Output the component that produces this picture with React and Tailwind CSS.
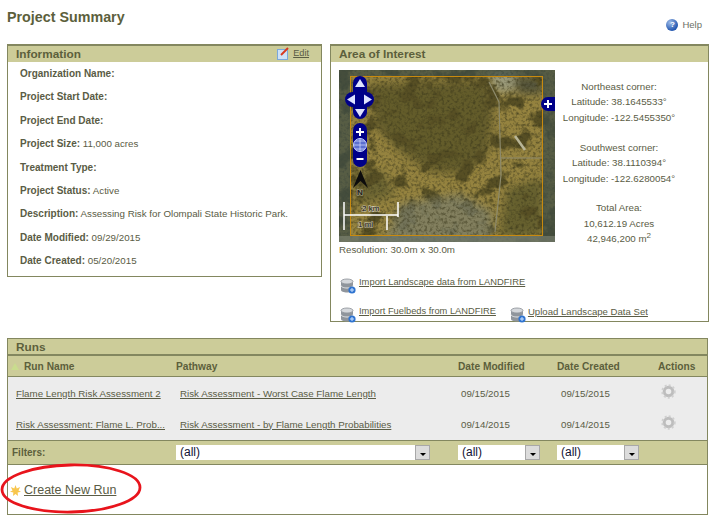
const infoRows = [
  ['Organization Name:', ''],
  ['Project Start Date:', ''],
  ['Project End Date:', ''],
  ['Project Size:', '11,000 acres'],
  ['Treatment Type:', ''],
  ['Project Status:', 'Active'],
  ['Description:', 'Assessing Risk for Olompali State Historic Park.'],
  ['Date Modified:', '09/29/2015'],
  ['Date Created:', '05/20/2015'],
];

const runs = [
  {
    name: 'Flame Length Risk Assessment 2',
    pathway: 'Risk Assessment - Worst Case Flame Length',
    modified: '09/15/2015',
    created: '09/15/2015',
  },
  {
    name: 'Risk Assessment: Flame L. Prob...',
    pathway: 'Risk Assessment - by Flame Length Probabilities',
    modified: '09/14/2015',
    created: '09/14/2015',
  },
];

const PanelTitle = ({ children, className = 'h-[16px]' }) => (
  <div className={`bg-[#cccc99] pl-[8px] text-[11.800px] leading-[16px] font-bold text-[#5c5f3c] ${className}`}>{children}</div>
);

const DbIcon = () => (
  <svg width="16" height="16" viewBox="0 0 16 16" className="relative shrink-0">
    <ellipse cx="7" cy="3.500" rx="6" ry="2.500" fill="#d5d8dc" stroke="#7d838a" strokeWidth="0.700" />
    <path d="M1 3.500v8.500c0 1.400 2.700 2.500 6 2.500s6-1.100 6-2.500V3.500c0 1.400-2.700 2.500-6 2.500S1 4.900 1 3.500z" fill="#8f959c" />
    <path d="M1 7.500c0 1.400 2.700 2.500 6 2.500s6-1.100 6-2.500" fill="none" stroke="#e4e6e8" strokeWidth="1" />
    <circle cx="12" cy="12" r="3.600" fill="#2f74d0" />
    <path d="M12 10v4M10 12h4" stroke="#cfe3ff" strokeWidth="1" />
  </svg>
);

const Gear = () => (
  <svg width="15" height="15" viewBox="0 0 15 15">
    <circle cx="7.500" cy="7.500" r="4.300" fill="none" stroke="#bdbdbd" strokeWidth="3" />
    <circle cx="7.500" cy="7.500" r="6.200" fill="none" stroke="#cfcfcf" strokeWidth="2" strokeDasharray="2 2.100" />
  </svg>
);

const SelectBox = ({ className }) => (
  <div className={`flex h-[15px] items-center justify-between bg-white pl-[4px] text-[12px] leading-[15px] text-[#111133] ${className}`}>
    <span>(all)</span>
    <span className="flex h-[15px] w-[15px] items-center justify-center border border-[#a8a8a8] bg-[#dcdcdc]">
      <span className="mt-[3px] h-0 w-0 border-x-[3px] border-t-[3px] border-x-transparent border-t-black" />
    </span>
  </div>
);

const AerialMap = () => (
  <svg width="216" height="172" viewBox="0 0 216 172" className="block">
    <defs>
      <filter id="patches" x="0" y="0" width="100%" height="100%" colorInterpolationFilters="sRGB">
        <feTurbulence type="fractalNoise" baseFrequency="0.05" numOctaves="4" seed="11" />
        <feColorMatrix values="0 0 0 0 0.34  0 0 0 0 0.31  0 0 0 0 0.14  7 0 0 0 -3.600" />
      </filter>
      <filter id="grain" x="0" y="0" width="100%" height="100%" colorInterpolationFilters="sRGB">
        <feTurbulence type="fractalNoise" baseFrequency="0.35" numOctaves="2" seed="4" />
        <feColorMatrix values="0 0 0 0 0.22  0 0 0 0 0.21  0 0 0 0 0.10  0 1.600 0 0 -0.700" />
      </filter>
      <filter id="soft"><feGaussianBlur stdDeviation="4" /></filter>
    </defs>
    <rect width="216" height="172" fill="#95833f" />
    <g filter="url(#soft)">
      <path d="M30 14 148 10 154 44 150 80 126 104 92 102 64 84 36 56z" fill="#635c2c" />
      <path d="M14 100 44 102 56 125 20 135z" fill="#6c6531" />
      <path d="M168 118 204 108 204 166 160 166z" fill="#66602f" />
      <path d="M172 6 204 6 204 24 180 24z" fill="#55543a" />
      <path d="M150 0 175 0 175 22 156 22z" fill="#9a9a7a" />
    </g>
    <rect width="216" height="172" filter="url(#patches)" />
    <g filter="url(#soft)">
      <path d="M62 134 120 124 154 142 152 172 44 172z" fill="#7b7d68" fillOpacity="0.750" />
    </g>
    <rect width="216" height="172" filter="url(#grain)" />
    <path d="M0 0H216V172H0ZM12 7V166H204V7Z" fill="#3d4d47" fillOpacity="0.700" fillRule="evenodd" />
    <path d="M0 166H216V172H0Z" fill="#8a8f80" fillOpacity="0.500" />
    <path d="M150 12 160 32 162 105 156 162M162 88H204" fill="none" stroke="#8d8a6c" strokeWidth="1.200" />
    <path d="M176 66 186 80" stroke="#b9b698" strokeWidth="2.500" />
    <rect x="11.500" y="6.500" width="192" height="159" fill="none" stroke="#c98a0e" strokeWidth="1" />
  </svg>
);

const MapControls = () => (
  <svg width="216" height="172" viewBox="0 0 216 172" className="absolute top-0 left-0">
    <rect x="14" y="6" width="14" height="43" rx="7" fill="#000088" />
    <rect x="6" y="22" width="29" height="15" rx="7.500" fill="#000088" />
    <path d="M21 9 26 17H16zM21 47 16 39H26zM8 29.500 16 24.500V34.500zM33 29.500 25 24.500V34.500z" fill="#dfe3ff" />
    <rect x="14" y="53" width="14" height="44" rx="7" fill="#000088" />
    <path d="M21 58v8M17 62h8M17.500 89h7" stroke="#fff" strokeWidth="2" />
    <circle cx="21" cy="75" r="6.500" fill="#5b6fd0" stroke="#c8d0ff" strokeWidth="1" />
    <path d="M14.500 75h13M21 68.500v13M16 71h10M16 79h10" stroke="#d8deff" strokeWidth="0.700" />
    <path d="M21.500 100 29 118 21.500 111 14 118z" fill="#0c0c0c" />
    <text x="18" y="125" fontSize="8" fontWeight="700" fontFamily="Liberation Sans" fill="#222" stroke="#fff" strokeOpacity="0.350" strokeWidth="1.500" paintOrder="stroke">N</text>
    <path d="M5 132v28M5 145H59M59 132v15M48 146v14" stroke="#fff" strokeWidth="1.500" fill="none" />
    <text x="23" y="141" fontSize="8" fontFamily="Liberation Sans" fill="#111" stroke="#fff" strokeOpacity="0.450" strokeWidth="1.500" paintOrder="stroke">2 km</text>
    <text x="19" y="157" fontSize="8" fontFamily="Liberation Sans" fill="#222" stroke="#fff" strokeOpacity="0.450" strokeWidth="1.500" paintOrder="stroke">1 mi</text>
    <path d="M216 27h-7a7 7 0 0 0 0 14h7z" fill="#000088" />
    <path d="M209 30v8M205 34h8" stroke="#fff" strokeWidth="2" />
  </svg>
);

export default function App() {
  return (
    <div className="relative h-[526px] w-[715px] overflow-hidden bg-white pt-[9px] pl-[7px] font-['Liberation_Sans',Arial,sans-serif] text-[9.750px] text-[#5a5c45]">
      <div className="flex h-[35px] items-start justify-between pr-[13px]">
        <h1 className="text-[14.300px] leading-[17px] font-bold text-[#5c5f3c]">Project Summary</h1>
        <div className="mt-[9px] flex items-center gap-[4px] text-[#6b6f66]">
          <span className="flex h-[12px] w-[12px] items-center justify-center rounded-full bg-[radial-gradient(circle_at_35%_30%,#9dbbe8,#2458b0_70%)] text-[8px] leading-none font-bold text-white">?</span>
          <span className="text-[9.500px]">Help</span>
        </div>
      </div>

      <div className="flex items-start gap-[8px]">
        <section className="h-[233px] w-[315px] border border-t-2 border-[#83875f]">
          <div className="flex items-center justify-between bg-[#cccc99] pr-[12px]">
            <PanelTitle>Information</PanelTitle>
            <div className="flex items-center gap-[4px] text-[9.200px] underline">
              <svg width="12" height="13" viewBox="0 0 12 13">
                <rect x="0.500" y="2.500" width="10" height="10" fill="#cfe2f7" stroke="#7aa8dc" />
                <path d="M4 8 11 1" stroke="#d83a20" strokeWidth="2" />
              </svg>
              <span>Edit</span>
            </div>
          </div>
          <div className="flex flex-col pl-[12px]">
            {infoRows.map(([label, value]) => (
              <p key={label} className="h-[23.400px] leading-[23.400px]">
                <b className="text-[10px]">{label}</b> {value}
              </p>
            ))}
          </div>
        </section>

        <section className="h-[278px] w-[379px] border border-t-2 border-[#83875f]">
          <PanelTitle>Area of Interest</PanelTitle>
          <div className="flex pt-[8px] pl-[8px]">
            <div className="w-[216px]">
              <div className="relative h-[172px] w-[216px]">
                <AerialMap />
                <MapControls />
              </div>
              <p className="mt-[1px] leading-[14px]">Resolution: 30.0m x 30.0m</p>
            </div>
            <div className="w-[128px] pt-[9px] text-center leading-[15.400px]">
              <p>Northeast corner:</p>
              <p>Latitude: 38.1645533°</p>
              <p>Longitude: -122.5455350°</p>
              <p className="mt-[14.500px]">Southwest corner:</p>
              <p>Latitude: 38.1110394°</p>
              <p>Longitude: -122.6280054°</p>
              <p className="mt-[14.500px]">Total Area:</p>
              <p>10,612.19 Acres</p>
              <p>42,946,200 m<sup className="text-[8px]">2</sup></p>
            </div>
          </div>
          <div className="mt-[21px] flex items-center gap-[3px] pl-[9px] text-[9.400px] underline">
            <DbIcon />
            <span className="-mt-[7px]">Import Landscape data from LANDFIRE</span>
          </div>
          <div className="mt-[13px] flex items-center pl-[9px] underline">
            <DbIcon />
            <span className="-mt-[6px] ml-[3px] text-[9.300px]">Import Fuelbeds from LANDFIRE</span>
            <span className="ml-[14px]"><DbIcon /></span>
            <span className="-mt-[6px] ml-[2px] text-[9.600px]">Upload Landscape Data Set</span>
          </div>
        </section>
      </div>

      <section className="mt-[16px] h-[177px] w-[701px] border border-[#83875f]">
        <PanelTitle className="h-[15px]">Runs</PanelTitle>
        <div className="grid h-[23px] grid-cols-[168px_282px_99px_101px_1fr] items-center border-t-2 border-b border-[#83875f] bg-[#cccc99] pt-[1px] text-[10.200px] font-bold text-[#5c5f3c]">
          <div className="flex items-center gap-[5px] pl-[3px]">
            <svg width="8" height="7" viewBox="0 0 8 7">
              <path d="M4 0 8 7H0z" fill="#c9dc8e" />
            </svg>
            <span>Run Name</span>
          </div>
          <div>Pathway</div>
          <div>Date Modified</div>
          <div>Date Created</div>
          <div>Actions</div>
        </div>
        <div className="h-[63px] bg-[#ececec] pt-[2px]">
          {runs.map((run) => (
            <div key={run.name} className="grid h-[30px] grid-cols-[172px_281px_99px_101px_1fr] items-center first:mb-[1px]">
              <span className="pl-[8px] whitespace-nowrap underline">{run.name}</span>
              <span className="whitespace-nowrap underline">{run.pathway}</span>
              <span>{run.modified}</span>
              <span className="pl-[1px]">{run.created}</span>
              <span className="-mt-[5px] flex"><Gear /></span>
            </div>
          ))}
        </div>
        <div className="flex h-[25px] items-center border-y border-[#83875f] bg-[#cccc99] pl-[4px] text-[10px] font-bold text-[#5c5f3c]">
          <span className="w-[164px]">Filters:</span>
          <div className="flex font-normal">
            <SelectBox className="w-[254px]" />
            <SelectBox className="ml-[28px] w-[82px]" />
            <SelectBox className="ml-[17px] w-[82px]" />
          </div>
        </div>
        <div className="flex h-[49px] items-center gap-[3px] pt-[1px] pl-[2px] text-[12.500px]">
          <svg width="11" height="11" viewBox="0 0 13 13">
            <path d="M6.500 0 8 4 12 2.500 10 6.500 13 8 9 9 9.500 13 6.500 10.500 3.500 13 4 9 0 8 3 6.500 1 2.500 5 4z" fill="#f8c64e" />
          </svg>
          <span className="underline">Create New Run</span>
        </div>
      </section>

      <svg width="145" height="52" viewBox="0 0 145 52" className="absolute top-[463px] left-0">
        <ellipse cx="71" cy="25.500" rx="69" ry="23.500" fill="none" stroke="#e8141c" strokeWidth="2.800" transform="rotate(-1 71 25.500)" />
      </svg>
    </div>
  );
}
